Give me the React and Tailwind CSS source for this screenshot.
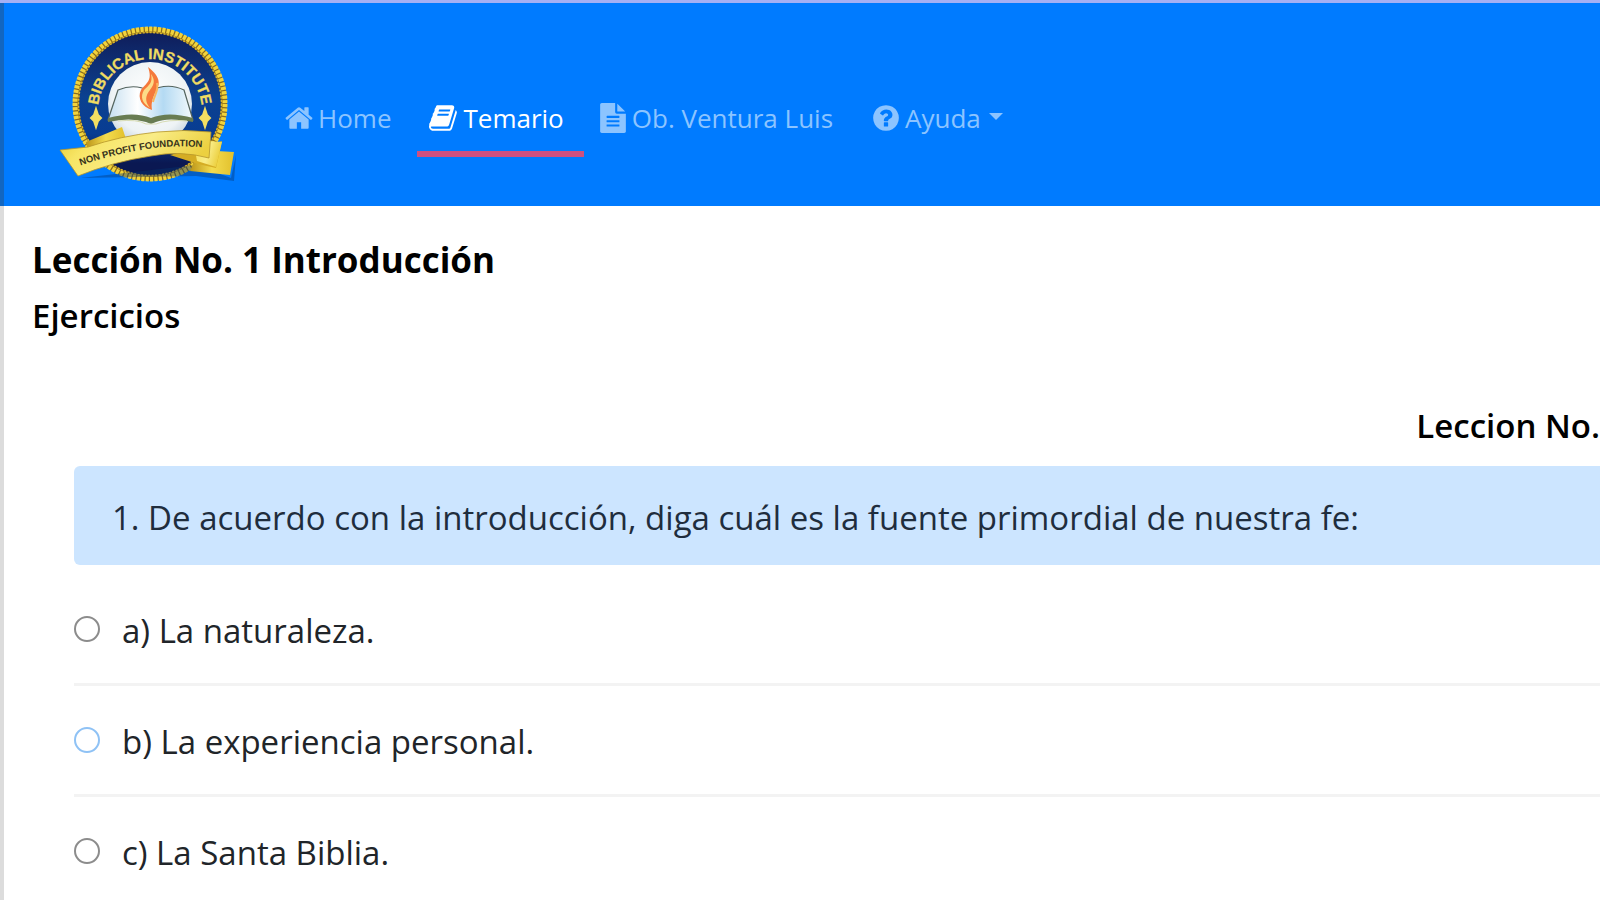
const paths = {
  home: "M1472 992v480q0 26-19 45t-45 19h-384v-384h-256v384h-384q-26 0-45-19t-19-45v-480q0-1 .5-3t.5-3l575-474 575 474q1 2 1 6zm223-69l-62 74q-8 9-21 11h-3q-13 0-21-7l-692-577-692 577q-12 8-24 7-13-2-21-11l-62-74q-8-10-7-23.5t11-21.5l719-599q32-26 76-26t76 26l244 204v-195q0-14 9-23t23-9h192q14 0 23 9t9 23v408l219 182q10 8 11 21.5t-7 23.5z",
  book: "M1639 478q40 57 18 129l-275 906q-19 64-76.5 107.5t-122.5 43.5h-923q-77 0-148.5-53.5t-99.5-131.5q-24-67-2-127 0-4 3-27t4-37q1-8-3-21.5t-3-19.5q2-11 8-21t16.5-23.5 16.5-23.5q23-38 45-91.5t30-91.5q3-10 .5-30t-.5-28q3-11 17-28t17-23q21-36 42-92t25-90q1-9-2.5-32t.5-28q4-13 22-30.5t22-22.5q19-26 42.5-84.5t27.5-96.5q1-8-3-25.5t-2-26.5q2-8 9-18t18-23 17-21q8-12 16.5-30.5t15-35 16-36 19.5-32 26.5-23.5 36-11.5 47.5 5.5l-1 3q38-9 51-9h761q74 0 114 56t18 130l-274 906q-36 119-71.5 153.5t-128.5 34.5h-869q-27 0-38 15-11 16-1 43 24 70 144 70h923q29 0 56-15.5t35-41.5l300-987q7-22 5-57 38 15 59 43zm-1064 2q-4 13 2 22.5t20 9.5h608q13 0 25.5-9.5t16.5-22.5l21-64q4-13-2-22.5t-20-9.5h-608q-13 0-25.5 9.5t-16.5 22.5zm-83 256q-4 13 2 22.5t20 9.5h608q13 0 25.5-9.5t16.5-22.5l21-64q4-13-2-22.5t-20-9.5h-608q-13 0-25.5 9.5t-16.5 22.5z",
  file: "M1596 476q14 14 28 36h-472v-472q22 14 36 28zm-476 164h544v1056q0 40-28 68t-68 28h-1344q-40 0-68-28t-28-68v-1600q0-40 28-68t68-28h800v544q0 40 28 68t68 28zm160 736v-64q0-14-9-23t-23-9h-704q-14 0-23 9t-9 23v64q0 14 9 23t23 9h704q14 0 23-9t9-23zm0-256v-64q0-14-9-23t-23-9h-704q-14 0-23 9t-9 23v64q0 14 9 23t23 9h704q14 0 23-9t9-23zm0-256v-64q0-14-9-23t-23-9h-704q-14 0-23 9t-9 23v64q0 14 9 23t23 9h704q14 0 23-9t9-23z",
  help: "M1024 1376v-192q0-14-9-23t-23-9h-192q-14 0-23 9t-9 23v192q0 14 9 23t23 9h192q14 0 23-9t9-23zm256-672q0-88-55.5-163t-138.5-116-170-41q-243 0-371 213-15 24 8 42l132 100q7 6 19 6 16 0 25-12 53-68 86-92 34-24 86-24 48 0 85.5 26t37.5 59q0 38-20 61t-68 45q-63 28-115.5 86.5t-52.5 125.5v36q0 14 9 23t23 9h192q14 0 23-9t9-23q0-19 21.5-49.5t54.5-49.5q32-18 49-28.5t46-35 44.5-48 28-60.5 12.5-81zm384 192q0 209-103 385.5t-279.5 279.5-385.5 103-385.5-103-279.5-279.5-103-385.5 103-385.5 279.5-279.5 385.5-103 385.5 103 279.5 279.5 103 385.5z",
};

function Icon({ name }) {
  return (
    <svg viewBox="0 0 1792 1792" fill="currentColor" aria-hidden="true" className="size-[30px] shrink-0">
      <path d={paths[name]} />
    </svg>
  );
}

function Logo() {
  return (
    <svg viewBox="56 20 184 168" role="img" aria-label="Biblical Institute" className="h-[168px] w-[184px] shrink-0">
      <defs>
        <linearGradient id="navy" x1="0" y1="0" x2="0" y2="1">
          <stop offset="0" stopColor="#101c58" />
          <stop offset="0.45" stopColor="#0b4190" />
          <stop offset="0.7" stopColor="#083c92" />
          <stop offset="0.9" stopColor="#0a1852" />
        </linearGradient>
        <radialGradient id="disc" cx="0.5" cy="0.4" r="0.6">
          <stop offset="0" stopColor="#ffffff" />
          <stop offset="0.75" stopColor="#eef3f5" />
          <stop offset="1" stopColor="#c9d6e0" />
        </radialGradient>
        <linearGradient id="page" x1="0" y1="0" x2="1" y2="0">
          <stop offset="0" stopColor="#c5dff0" />
          <stop offset="0.35" stopColor="#ffffff" />
          <stop offset="0.65" stopColor="#b4daf3" />
          <stop offset="1" stopColor="#f4fafc" />
        </linearGradient>
        <linearGradient id="ribbon" x1="0" y1="0" x2="1" y2="0.3">
          <stop offset="0" stopColor="#e6c832" />
          <stop offset="0.25" stopColor="#f7e565" />
          <stop offset="0.6" stopColor="#f9ec86" />
          <stop offset="1" stopColor="#ecd040" />
        </linearGradient>
        <linearGradient id="fold" x1="0" y1="0" x2="1" y2="0">
          <stop offset="0" stopColor="#bb9418" />
          <stop offset="0.5" stopColor="#f3dc4f" />
          <stop offset="1" stopColor="#e2c02c" />
        </linearGradient>
        <path id="arcTop" d="M98 110A52 52 0 1 1 202 110" />
        <path id="arcRibbon" d="M73 167Q106 155 141 149Q172 143 210 147" />
      </defs>

      <circle cx="150" cy="103" r="74" fill="url(#navy)" stroke="#8a6b1c" strokeWidth="6" />
      <circle cx="150" cy="103" r="75" fill="none" stroke="#f1d33c" strokeWidth="5" strokeDasharray="3.2 1.2" />
      <circle cx="150" cy="103" r="71.5" fill="none" stroke="#d9b52e" strokeWidth="1.5" strokeDasharray="2 1.5" />
      <circle cx="150" cy="103" r="42" fill="url(#disc)" />

      <text fill="#f0dc62" fontFamily="Liberation Sans, sans-serif" fontWeight="700" fontSize="15" stroke="#f0dc62" strokeWidth="0.3">
        <textPath href="#arcTop" startOffset="50%" textAnchor="middle">BIBLICAL INSTITUTE</textPath>
      </text>
      <path d="M96 108l2 6 3 3-3 3-2 6-2-6-3-3 3-3zM205 108l2 6 3 3-3 3-2 6-2-6-3-3 3-3z" fill="#f3df62" stroke="#f3df62" strokeWidth="2" />

      <path d="M118 89Q135 82 149 90Q168 81 184 89L193 119Q166 112 151 120Q134 112 108 119z" fill="url(#page)" stroke="#54645e" strokeWidth="1.2" />
      <path d="M108 117Q134 110 151 117Q168 110 193 117V121Q168 116 156 121L151 123L146 121Q130 116 108 121z" fill="#687c52" />
      <path d="M118 120Q137 118 146 123H156Q168 118 187 120" fill="none" stroke="#d7dcb4" strokeWidth="1" />
      <path d="M148 66C162 77 160 84 155 92C152 99 151 103 152 109C142 106 137 97 141 89C146 82 153 80 148 66z" fill="#f5793b" />
      <path d="M151 73C158 83 150 87 147 94C145 99 147 103 150 107C142 102 140 96 144 89C149 84 153 82 151 73z" fill="#fddc88" />
      <path d="M157 82C159 89 154 95 153 101" fill="none" stroke="#fbb45c" strokeWidth="2" />

      <path d="M80 177L196 164L231 177L236 154L234 180L196 175Z" fill="#06356f" opacity="0.4" />
      <path d="M86 141L122 126L126 138L88 150z" fill="url(#fold)" />
      <path d="M199 149L234 151L230 174L190 170z" fill="url(#fold)" />
      <path d="M170 154L222 140L216 167L198 163z" fill="#d5ad24" />
      <path d="M193 139L222 141L216 166L197 160z" fill="url(#ribbon)" />
      <path d="M60 149L88 146Q120 135 157 131Q184 128 211 131L209 157Q180 149 151 155Q112 161 78 175z" fill="url(#ribbon)" stroke="#b59428" strokeWidth="0.8" />
      <text fill="#35311a" fontFamily="Liberation Sans, sans-serif" fontWeight="700" fontSize="9.5">
        <textPath href="#arcRibbon" startOffset="50%" textAnchor="middle">NON PROFIT FOUNDATION</textPath>
      </text>
    </svg>
  );
}

function NavLink({ icon, label, active, caret, className = "" }) {
  return (
    <a
      href="#"
      className={
        "flex h-[76px] items-center gap-1 border-b-[6px] pt-1 whitespace-nowrap " +
        (active ? "border-[#cf5080] font-medium text-white " : "border-transparent text-[#8cc4ff] ") +
        className
      }
    >
      <Icon name={icon} />
      <span>{label}</span>
      {caret && (
        <svg viewBox="0 0 14 7" fill="currentColor" aria-hidden="true" className="mb-1 ml-1 h-[7px] w-[14px]">
          <path d="M0 0h14L7 7z" />
        </svg>
      )}
    </a>
  );
}

const options = [
  { id: "a", text: "a) La naturaleza.", ring: "border-[#8c8c8c]" },
  { id: "b", text: "b) La experiencia personal.", ring: "border-[#8fc2f5]" },
  { id: "c", text: "c) La Santa Biblia.", ring: "border-[#8c8c8c]" },
];

export default function App() {
  return (
    <div className="flex min-h-screen flex-col overflow-x-hidden bg-white font-['Open_Sans','Noto_Sans',sans-serif] text-black">
      <header className="border-t-[3px] border-[#a5b0f4]">
        <div className="flex items-start border-l-4 border-[#1266c0] bg-[#007bff] pt-[18px] pb-[17px] pl-[52px]">
          <Logo />
          <nav className="mt-[60px] ml-11 flex gap-3.5 text-[26px]">
            <NavLink icon="home" label="Home" className="pr-3" />
            <NavLink icon="book" label="Temario" active className="pr-5 pl-3" />
            <NavLink icon="file" label="Ob. Ventura Luis" className="pr-6" />
            <NavLink icon="help" label="Ayuda" caret />
          </nav>
        </div>
      </header>

      <main className="flex-1 border-l-4 border-[#dcdcdc] pt-[26px] pl-7">
        <h1 className="text-[35px] leading-[56px] font-bold">Lección No. 1 Introducción</h1>
        <h2 className="text-[33px] leading-[56px] font-semibold">Ejercicios</h2>

        <section className="mt-[54px] pl-[42px]">
          <h3 className="text-right text-[33px] leading-[56px] font-semibold">Leccion No.</h3>
          <fieldset className="mt-3">
            <legend className="mb-[38px] w-full rounded-l-md bg-[#cce5ff] px-[38px] pt-[26px] pb-[22px] text-[33px] leading-[51px] text-[#1f2d3d]">
              1. De acuerdo con la introducción, diga cuál es la fuente primordial de nuestra fe:
            </legend>
            <ul>
              {options.map((o) => (
                <li key={o.id} className="mb-7 border-b-[3px] border-[#f3f3f3] pb-6 last:mb-0 last:border-0 last:pb-0">
                  <label htmlFor={o.id} className="flex items-center gap-[22px] text-[33px] leading-[56px] text-[#212529]">
                    <input
                      id={o.id}
                      name="respuesta"
                      type="radio"
                      className={"mb-1 size-[26px] shrink-0 appearance-none rounded-full border-2 bg-white checked:border-8 " + o.ring}
                    />
                    {o.text}
                  </label>
                </li>
              ))}
            </ul>
          </fieldset>
        </section>
      </main>
    </div>
  );
}
